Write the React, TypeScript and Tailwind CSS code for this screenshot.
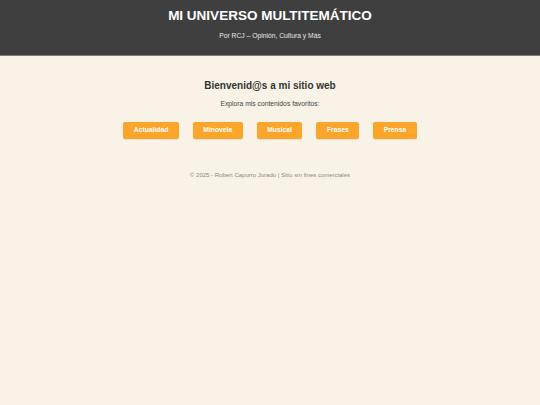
const links = ['Actualidad', 'Minovela', 'Musical', 'Frases', 'Prensa'];

export default function App() {
  return (
    <div
      className="min-h-[405px] w-full bg-[#f8f3e6] text-[#333]"
      style={{ fontFamily: '"Liberation Sans", Arial, sans-serif' }}
    >
      <header className="h-[56px] bg-[#3f3f3f] border-b border-[#7a7a7a] pt-[8px] text-center text-white">
        <h1 className="text-[13.5px] leading-[16px] font-bold">MI UNIVERSO MULTITEMÁTICO</h1>
        <p className="mt-[8px] text-[6.75px] leading-[8px] text-[#e8e8e8]">Por RCJ – Opinión, Cultura y Más</p>
      </header>

      <main className="pt-[23px] text-center">
        <h2 className="text-[10px] leading-[13px] font-bold text-[#333]">Bienvenid@s a mi sitio web</h2>
        <p className="mt-[8px] text-[6.75px] leading-[8px] text-[#444]">Explora mis contenidos favoritos:</p>
        <nav className="mt-[14px] flex justify-center gap-[14px]">
          {links.map(l => (
            <a
              key={l}
              href="#"
              className="flex h-[17px] items-center rounded-[2px] bg-[#fba52a] px-[10.5px] text-[6.75px] font-bold text-white shadow-[0_1px_1px_rgba(0,0,0,0.08)]"
            >
              {l}
            </a>
          ))}
        </nav>
      </main>

      <footer className="mt-[32px] text-center text-[6px] leading-[8px] text-[#888]">
        © 2025 - Robert Capurro Jurado | Sitio sin fines comerciales
      </footer>
    </div>
  );
}
